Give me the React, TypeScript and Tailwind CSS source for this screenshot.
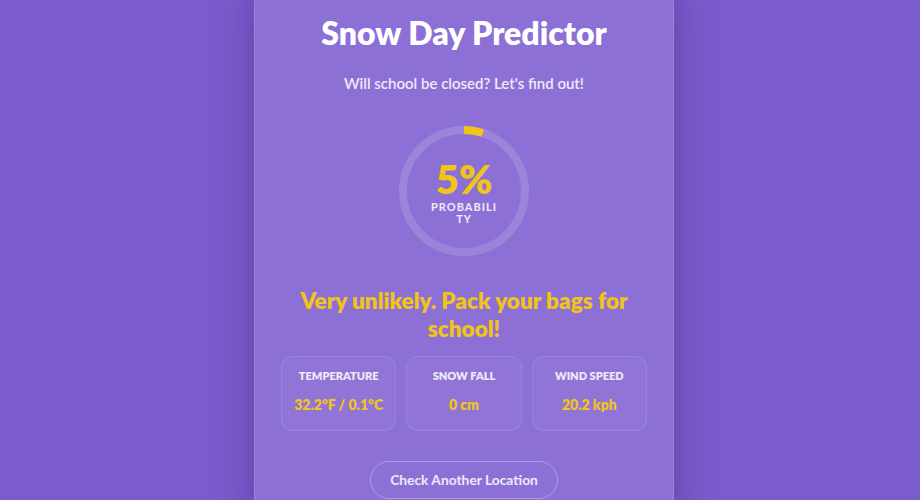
import React from 'react';

const stats = [
  { label: 'Temperature', value: '32.2°F / 0.1°C' },
  { label: 'Snow Fall', value: '0 cm' },
  { label: 'Wind Speed', value: '20.2 kph' },
];

function ProbabilityRing({ percent }: { percent: number }) {
  const r = 61;
  const c = 2 * Math.PI * r;
  return (
    <div className="relative w-[130px] h-[130px]">
      <svg width="130" height="130" viewBox="0 0 130 130" className="-rotate-90">
        <circle cx="65" cy="65" r={r} fill="none" stroke="rgba(255,255,255,0.14)" strokeWidth="8" />
        <circle
          cx="65"
          cy="65"
          r={r}
          fill="none"
          stroke="#f2c41a"
          strokeWidth="8"
          strokeDasharray={`${(c * percent) / 100} ${c}`}
        />
      </svg>
      <div className="absolute inset-0 flex flex-col items-center justify-center">
        <span className="text-[40px] leading-[44px] font-extrabold text-[#f2c41a]">{percent}%</span>
        <span className="w-[68px] break-all text-center text-[11px] leading-[12px] font-bold tracking-[1px] uppercase text-white/85">
          Probability
        </span>
      </div>
    </div>
  );
}

export default function App() {
  return (
    <div
      className="h-[500px] overflow-hidden bg-[#7c5ccd] flex justify-center"
      style={{ fontFamily: 'Lato, "Noto Sans", sans-serif' }}
    >
      <div className="ml-[8px] w-[420px] -mt-5 pt-[32px] pb-10 rounded-3xl bg-[#8c70d6] border border-white/15 shadow-[0_0_40px_rgba(60,30,120,0.45)] flex flex-col items-center h-[560px]">
        {/* Title */}
        <h1 className="text-[32px] leading-[40px] font-extrabold text-white">Snow Day Predictor</h1>
        <p className="mt-[19px] text-[15px] leading-[22px] font-semibold text-white/85">
          Will school be closed? Let's find out!
        </p>

        <div className="mt-[32px]">
          <ProbabilityRing percent={5} />
        </div>

        {/* Verdict */}
        <p className="mt-[31px] px-6 text-center text-[22.5px] leading-[28px] font-extrabold text-[#f2c41a]">
          Very unlikely. Pack your bags for school!
        </p>

        {/* Stats */}
        <div className="mt-[13px] w-full px-[26px] grid grid-cols-3 gap-[10px]">
          {stats.map((s) => (
            <div
              key={s.label}
              className="h-[75px] rounded-xl bg-white/[0.04] border border-white/10 flex flex-col items-center pt-[12px]"
            >
              <span className="text-[11px] leading-[14px] font-extrabold uppercase text-white/85">{s.label}</span>
              <span className="mt-[13px] text-[14px] leading-[18px] font-extrabold text-[#f2c41a]">{s.value}</span>
            </div>
          ))}
        </div>

        <button className="mt-[30px] w-[188px] h-[44px] rounded-full border border-white/30 text-[13.8px] font-bold text-white/85">
          Check Another Location
        </button>
      </div>
    </div>
  );
}
